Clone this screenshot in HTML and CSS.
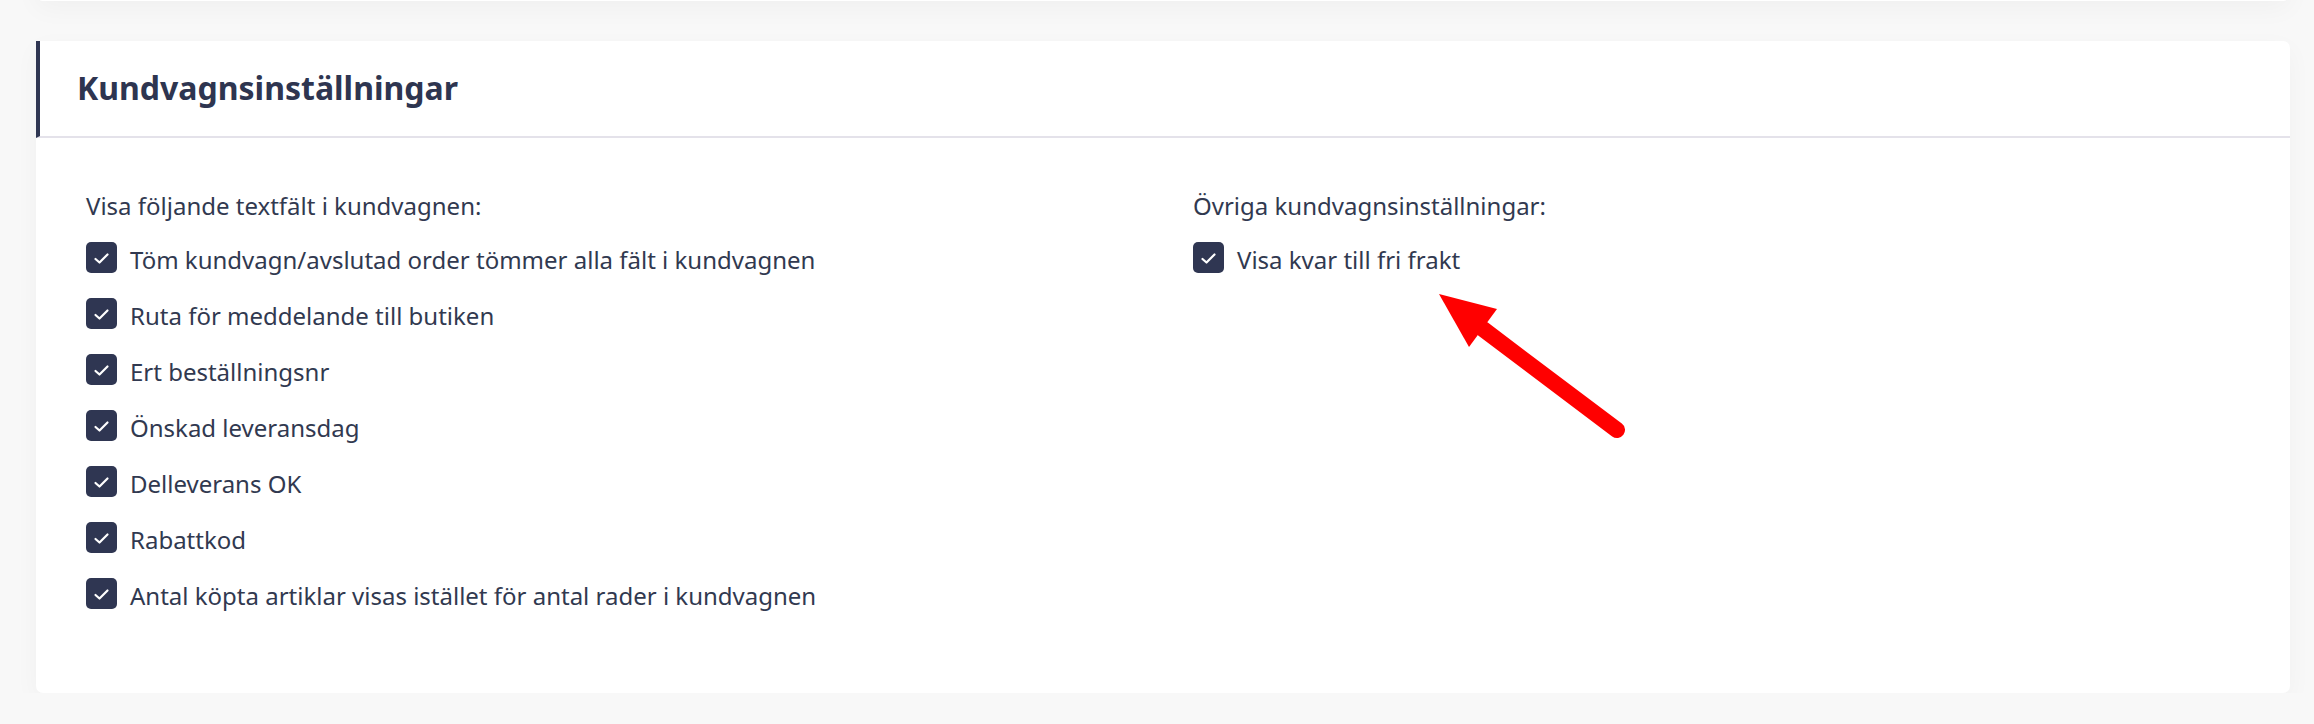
FILE: index.html
```html
<!DOCTYPE html>
<html>
<head>
	<meta charset="utf-8">
	<title>Kundvagnsinställningar</title>
	<link rel="stylesheet" href="styles.css">
</head>
<body>
<div class="page">
	<div class="card card-prev"></div>

	<div class="card">
		<div class="card-head">
			<h2>Kundvagnsinställningar</h2>
		</div>
		<div class="card-body">
			<div class="col">
				<p class="col-title">Visa följande textfält i kundvagnen:</p>
				<ul class="checks">
					<li><span class="box"><svg viewBox="0 0 31 31"><polyline points="9.5,17 13.5,20.5 21.5,12.5"/></svg></span><span class="label">Töm kundvagn/avslutad order tömmer alla fält i kundvagnen</span></li>
					<li><span class="box"><svg viewBox="0 0 31 31"><polyline points="9.5,17 13.5,20.5 21.5,12.5"/></svg></span><span class="label">Ruta för meddelande till butiken</span></li>
					<li><span class="box"><svg viewBox="0 0 31 31"><polyline points="9.5,17 13.5,20.5 21.5,12.5"/></svg></span><span class="label">Ert beställningsnr</span></li>
					<li><span class="box"><svg viewBox="0 0 31 31"><polyline points="9.5,17 13.5,20.5 21.5,12.5"/></svg></span><span class="label">Önskad leveransdag</span></li>
					<li><span class="box"><svg viewBox="0 0 31 31"><polyline points="9.5,17 13.5,20.5 21.5,12.5"/></svg></span><span class="label">Delleverans OK</span></li>
					<li><span class="box"><svg viewBox="0 0 31 31"><polyline points="9.5,17 13.5,20.5 21.5,12.5"/></svg></span><span class="label">Rabattkod</span></li>
					<li><span class="box"><svg viewBox="0 0 31 31"><polyline points="9.5,17 13.5,20.5 21.5,12.5"/></svg></span><span class="label">Antal köpta artiklar visas istället för antal rader i kundvagnen</span></li>
				</ul>
			</div>
			<div class="col">
				<p class="col-title">Övriga kundvagnsinställningar:</p>
				<ul class="checks">
					<li><span class="box"><svg viewBox="0 0 31 31"><polyline points="9.5,17 13.5,20.5 21.5,12.5"/></svg></span><span class="label">Visa kvar till fri frakt</span></li>
				</ul>
			</div>
		</div>

		<!-- pil som pekar på inställningen -->
		<svg class="arrow" viewBox="0 0 200 160">
			<line x1="53" y1="44" x2="187" y2="145"/>
			<polygon points="9,9 67,24 39,62"/>
		</svg>
	</div>
</div>
</body>
</html>
```

FILE: styles.css
```css
html,body{margin:0;padding:0;}
body{background:#f8f8f8;color:#313950;font:24px/1.5 "Noto Sans","Open Sans",sans-serif;overflow:hidden;}
h2,p,ul{margin:0;padding:0;}
ul{list-style:none;}

.page{padding:0 24px 0 36px;}

.card{position:relative;background:#fff;border-radius:0 7px 7px 7px;box-shadow:0 8px 26px rgba(0,0,0,.035);}
.card-prev{height:40px;margin-top:-39px;margin-bottom:40px;border-radius:7px;}

.card-head{border-left:4px solid #2f3652;border-bottom:2px solid #e4e2ea;padding:23px 37px 24px;}
.card-head h2{font-size:32px;line-height:48px;font-weight:700;color:#2e3550;}

.card-body{display:grid;grid-template-columns:1fr 1fr;column-gap:60px;padding:50px 50px 79px;}
.col-title{line-height:36px;margin-bottom:16px;}

.checks{display:flex;flex-direction:column;gap:18px;}
.checks li{display:flex;align-items:flex-start;gap:13px;line-height:36px;}
.box{flex:none;width:31px;height:31px;margin-top:2px;border-radius:5px;background:#2f3652;}
.box svg{display:block;width:31px;height:31px;fill:none;stroke:#fff;stroke-width:2.2;stroke-linecap:round;stroke-linejoin:round;}
.label{padding-top:2px;}

.arrow{position:absolute;left:1394px;top:244px;width:200px;height:160px;}
.arrow line{stroke:#ff0000;stroke-width:16;stroke-linecap:round;}
.arrow polygon{fill:#ff0000;}
```
